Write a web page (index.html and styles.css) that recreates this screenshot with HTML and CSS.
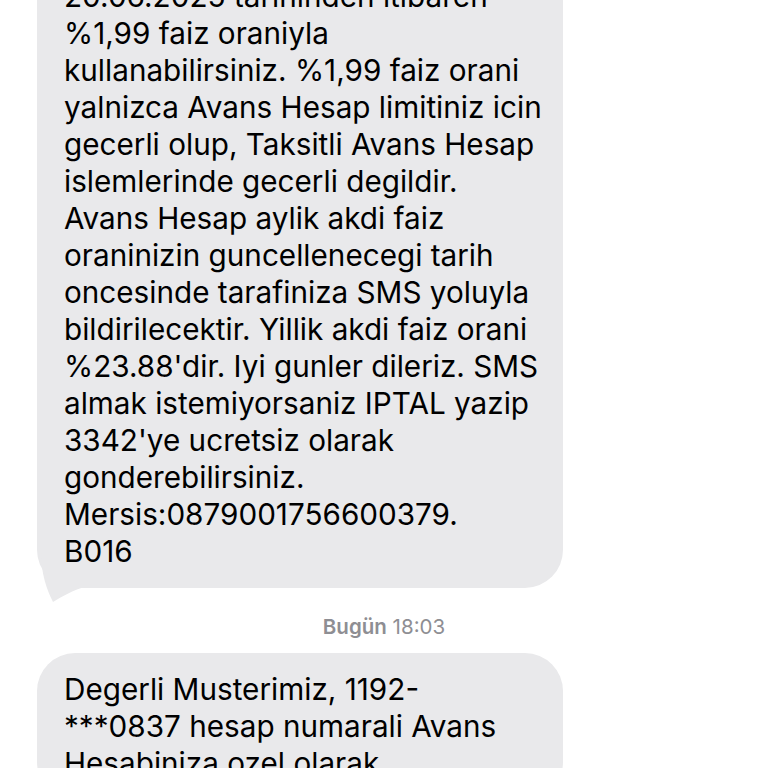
FILE: index.html
```html
<!DOCTYPE html>
<html lang="tr">
<head>
<meta charset="utf-8">
<link rel="stylesheet" href="styles.css">
</head>
<body>
<div class="thread">
  <div class="bubble first">
    <svg class="tail" width="50" height="52" viewBox="0 0 50 52"><path d="M0,0 L4,0 C4,22 10,38 16,50 C26,44 36,38 48,35 L48,0 Z" fill="#e9e9eb"/></svg>
    <p class="msg">20.06.2025 tarihinden itibaren<br>%1,99 faiz oraniyla<br>kullanabilirsiniz. %1,99 faiz orani<br>yalnizca Avans Hesap limitiniz icin<br>gecerli olup, Taksitli Avans Hesap<br>islemlerinde gecerli degildir.<br>Avans Hesap aylik akdi faiz<br>oraninizin guncellenecegi tarih<br>oncesinde tarafiniza SMS yoluyla<br>bildirilecektir. Yillik akdi faiz orani<br>%23.88'dir. Iyi gunler dileriz. SMS<br>almak istemiyorsaniz IPTAL yazip<br>3342'ye ucretsiz olarak<br>gonderebilirsiniz.<br>Mersis:0879001756600379.<br>B016</p>
  </div>
  <div class="stamp"><span class="day">Bugün</span> 18:03</div>
  <div class="bubble">
    <p class="msg">Degerli Musterimiz, 1192-<br>***0837 hesap numarali Avans<br>Hesabiniza ozel olarak</p>
  </div>
</div>
</body>
</html>
```
FILE: styles.css
```css
html, body {
  margin: 0;
  padding: 0;
  background: #ffffff;
  overflow: hidden;
  height: 768px;
}
.thread {
  padding-left: 37px;
  width: 526px;
  font-family: Inter, "Liberation Sans", sans-serif;
}
.bubble {
  position: relative;
  background: #e9e9eb;
  border-radius: 38px;
  padding: 18px 27px;
}
.bubble.first {
  margin-top: -40px;
}
.msg {
  position: relative;
  margin: 0;
  font-size: 29.7px;
  line-height: 37px;
  color: #000000;
  white-space: nowrap;
}
.tail {
  position: absolute;
  left: 0;
  bottom: -16px;
}
.stamp {
  margin: 27px 0 14px -37px;
  width: 768px;
  text-align: center;
  font-size: 20.5px;
  line-height: 24px;
  color: #8e8e93;
}
.day {
  font-weight: 600;
}
```
